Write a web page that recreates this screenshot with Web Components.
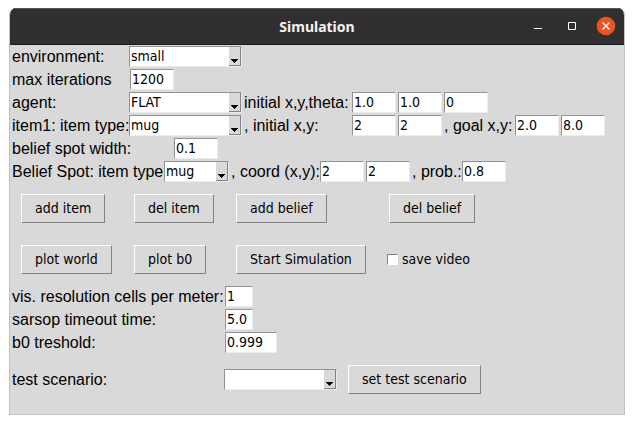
<!DOCTYPE html>
<html lang="en">
<head>
<meta charset="utf-8">
<title>Simulation</title>
<style>
  body { margin: 0; padding: 8px 9px; background: #fff; font: 16px/21px "Liberation Sans", Arial, sans-serif; color: #000; }
</style>
</head>
<body>
<sim-window heading="Simulation">
  <form-row><choice-field label="environment:" value="small" style="--label:117px;--size:113px"></choice-field></form-row>
  <form-row><entry-field label="max iterations" values="1200" style="--label:118px"></entry-field></form-row>
  <form-row>
    <choice-field label="agent:" value="FLAT" style="--label:117px;--size:113px"></choice-field>
    <entry-field label="initial x,y,theta:" values="1.0|1.0|0" style="--label:108px"></entry-field>
  </form-row>
  <form-row>
    <choice-field label="item1: item type:" value="mug" style="--label:117px;--size:113px"></choice-field>
    <entry-field label=", initial x,y:" values="2|2" style="--label:108px"></entry-field>
    <entry-field label=", goal x,y:" values="2.0|8.0" style="--label:71px"></entry-field>
  </form-row>
  <form-row><entry-field label="belief spot width:" values="0.1" style="--label:162px"></entry-field></form-row>
  <form-row>
    <choice-field label="Belief Spot: item type" value="mug" style="--label:152px;--size:65px"></choice-field>
    <entry-field label=", coord (x,y):" values="2|2" style="--label:89px"></entry-field>
    <entry-field label=", prob.:" values="0.8" style="--label:50px"></entry-field>
  </form-row>
  <button-grid>
    <push-button>add item</push-button>
    <push-button>del item</push-button>
    <push-button>add belief</push-button>
    <push-button>del belief</push-button>
    <push-button>plot world</push-button>
    <push-button>plot b0</push-button>
    <push-button>Start Simulation</push-button>
    <check-field>save video</check-field>
  </button-grid>
  <form-row><entry-field label="vis. resolution cells per meter:" values="1" style="--label:213px;--size:28px"></entry-field></form-row>
  <form-row><entry-field label="sarsop timeout time:" values="5.0" style="--label:213px;--size:28px"></entry-field></form-row>
  <form-row><entry-field label="b0 treshold:" values="0.999" style="--label:213px;--size:52px"></entry-field></form-row>
  <form-row style="--gap:11px;--pad:11px">
    <choice-field label="test scenario:" value="" style="--label:212px;--size:113px"></choice-field>
    <push-button>set test scenario</push-button>
  </form-row>
</sim-window>

<script>
const UI_FONT = 'font: 14px/17px "DejaVu Sans Condensed", "DejaVu Sans", sans-serif;';

class SimWindow extends HTMLElement {
  connectedCallback() {
    this.attachShadow({ mode: 'open' }).innerHTML = `
      <style>
        :host { display: block; border: 1px solid #c0c0c0; border-top: 0; border-radius: 7px 7px 0 0; overflow: hidden; background: #d9d9d9; }
        header { display: grid; grid-template-columns: 1fr auto 1fr; align-items: center; height: 36px; background: #322f30; border-bottom: 1px solid #1c1b1b; box-shadow: inset 0 1px #555; color: #fff; }
        h1 { grid-column: 2; margin: 0; padding-top: 1px; font: bold 14px/20px "Noto Sans", "Open Sans", sans-serif; color: #f4f2f0; }
        nav { display: flex; justify-content: flex-end; gap: 14px; padding-right: 8px; }
        button { display: block; width: 20px; height: 20px; padding: 0; border: 0; background: none; }
        svg { display: block; }
        main { display: block; padding: 0 2px 20px; }
      </style>
      <header>
        <h1></h1>
        <nav>
          <button type="button" aria-label="Minimize"><svg width="20" height="20"><path d="M6 12.5h8" stroke="#fff" fill="none"/></svg></button>
          <button type="button" aria-label="Maximize"><svg width="20" height="20"><path d="M6.500 6.500h7v7h-7z" stroke="#fff" fill="none"/></svg></button>
          <button type="button" aria-label="Close"><svg width="20" height="20"><circle cx="10" cy="10" r="9.300" fill="#e95420"/><path d="M6.500 6.500l7 7M13.500 6.500l-7 7" stroke="#fff" stroke-width="1.400" fill="none"/></svg></button>
        </nav>
      </header>
      <main><slot></slot></main>`;
    this.shadowRoot.querySelector('h1').textContent = this.getAttribute('heading');
  }
}

class FormRow extends HTMLElement {
  connectedCallback() {
    this.attachShadow({ mode: 'open' }).innerHTML = `
      <style>:host { display: flex; align-items: center; gap: var(--gap, 2px); min-height: 23px; padding-top: var(--pad, 0); }</style>
      <slot></slot>`;
  }
}

const FIELD_CSS = `
  :host { display: flex; align-items: center; flex: none; }
  label { flex: none; width: var(--label); white-space: nowrap; }
  input, select { box-sizing: border-box; height: 21px; margin: 0; padding: 0 1px 1px; border: 1px solid; border-color: #929292 #ececec #ececec #929292; border-radius: 0; background: #fff; color: #000; outline: 0; appearance: none; ${UI_FONT} }`;

class EntryField extends HTMLElement {
  connectedCallback() {
    const root = this.attachShadow({ mode: 'open' });
    root.innerHTML = `
      <style>${FIELD_CSS}
        div { display: flex; gap: 2px; }
        input { width: var(--size, 44px); }
      </style>
      <label for="v0"></label><div></div>`;
    const text = this.getAttribute('label');
    root.querySelector('label').textContent = text;
    this.getAttribute('values').split('|').forEach((value, i) => {
      const input = document.createElement('input');
      input.type = 'text';
      input.id = 'v' + i;
      input.value = value;
      if (i) input.setAttribute('aria-label', text + ' ' + (i + 1));
      root.querySelector('div').append(input);
    });
  }
}

class ChoiceField extends HTMLElement {
  connectedCallback() {
    const root = this.attachShadow({ mode: 'open' });
    root.innerHTML = `
      <style>${FIELD_CSS}
        div { display: grid; width: var(--size); }
        select, svg { grid-area: 1 / 1; }
        select { width: 100%; padding-right: 14px; }
        svg { justify-self: end; align-self: center; margin-right: 1px; pointer-events: none; }
      </style>
      <label for="choice"></label>
      <div>
        <select id="choice"><option></option></select>
        <svg width="12" height="19" shape-rendering="crispEdges"><path d="M0 0h12v19h-12z" fill="#d9d9d9"/><path d="M11.500 0v18.500H0" stroke="#828282" fill="none"/><path d="M2 12h7v1h-1v1h-1v1h-1v1h-1v-1h-1v-1h-1v-1h-1z"/></svg>
      </div>`;
    root.querySelector('label').textContent = this.getAttribute('label');
    root.querySelector('option').textContent = this.getAttribute('value');
  }
}

class ButtonGrid extends HTMLElement {
  connectedCallback() {
    this.attachShadow({ mode: 'open' }).innerHTML = `
      <style>:host { display: grid; grid-template-columns: 113px 102px 151px 1fr; row-gap: 22px; padding: 11px 0 11px 9px; align-items: center; justify-items: start; }
      ::slotted(push-button:nth-child(4)) { margin-left: 2px; }</style>
      <slot></slot>`;
  }
}

class PushButton extends HTMLElement {
  connectedCallback() {
    this.attachShadow({ mode: 'open' }).innerHTML = `
      <style>
        :host { display: block; flex: none; }
        button { display: block; box-sizing: border-box; height: 29px; margin: 0; padding: 0 13px 1px; border: 1px solid; border-color: #fff #828282 #828282 #fff; border-radius: 0; background: #d9d9d9; color: #000; white-space: nowrap; ${UI_FONT} }
      </style>
      <button type="button"><slot></slot></button>`;
  }
}

class CheckField extends HTMLElement {
  connectedCallback() {
    this.attachShadow({ mode: 'open' }).innerHTML = `
      <style>
        :host { display: block; }
        label { display: flex; align-items: center; gap: 4px; ${UI_FONT} }
        input { appearance: none; box-sizing: border-box; width: 11px; height: 11px; margin: 0; background: #fff; border: 1px solid; border-color: #828282 #fff #fff #828282; }
        input:checked { background: #000; }
      </style>
      <label><input type="checkbox"><span><slot></slot></span></label>`;
  }
}

customElements.define('sim-window', SimWindow);
customElements.define('form-row', FormRow);
customElements.define('entry-field', EntryField);
customElements.define('choice-field', ChoiceField);
customElements.define('button-grid', ButtonGrid);
customElements.define('push-button', PushButton);
customElements.define('check-field', CheckField);
</script>
</body>
</html>
